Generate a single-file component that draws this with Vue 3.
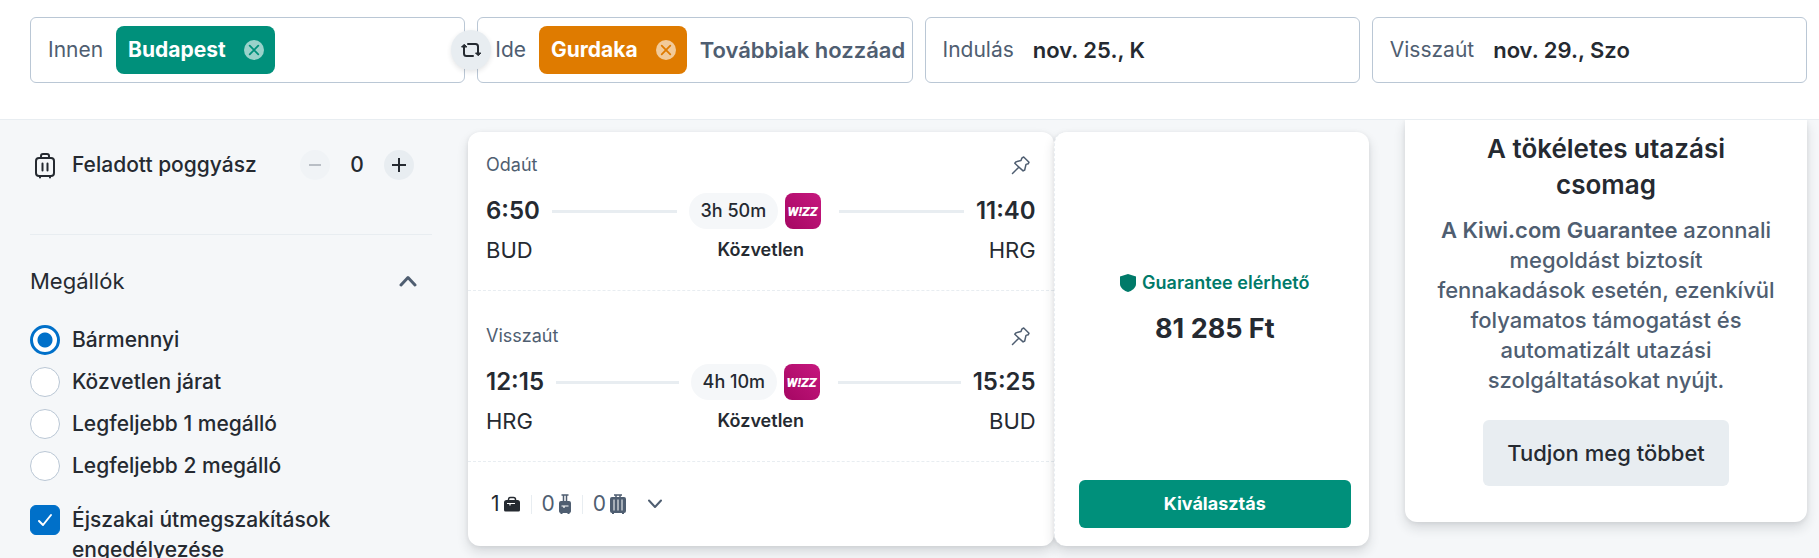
<script setup>
import { ref } from 'vue'

const stops = ref('any')
const overnight = ref(true)
const bags = ref(0)

const stopOptions = [
  { id: 'any', label: 'Bármennyi' },
  { id: 'direct', label: 'Közvetlen járat' },
  { id: 'one', label: 'Legfeljebb 1 megálló' },
  { id: 'two', label: 'Legfeljebb 2 megálló' },
]

const segments = [
  { title: 'Odaút', from: 'BUD', to: 'HRG', dep: '6:50', arr: '11:40', duration: '3h 50m', stops: 'Közvetlen' },
  { title: 'Visszaút', from: 'HRG', to: 'BUD', dep: '12:15', arr: '15:25', duration: '4h 10m', stops: 'Közvetlen' },
]
</script>

<template>
  <div class="page">
    <header class="search">
      <div class="field">
        <label for="from">Innen</label>
        <span class="chip green">
          Budapest
          <button type="button" aria-label="Budapest">
            <svg viewBox="0 0 20 20" width="20" height="20"><circle cx="10" cy="10" r="10" fill="#fff" fill-opacity=".6" /><path d="M5.7 5.7l8.6 8.6M14.3 5.7l-8.6 8.6" stroke="#00907b" stroke-width="1.8" stroke-linecap="round" /></svg>
          </button>
        </span>
        <input id="from" type="text" />
        <button type="button" class="swap" aria-label="Csere">
          <svg viewBox="0 0 22 16" width="22" height="16" fill="none" stroke="#252a31" stroke-width="2" stroke-linecap="round" stroke-linejoin="round">
            <path d="M4 4v7.5a2.5 2.5 0 0 0 2.5 2.500H13M8 2h7.500a2.500 2.500 0 0 1 2.500 2.500V12" />
            <path d="M4 2.500L1.500 5h5zM18 13.500l-2.500-2.500h5z" fill="#252a31" stroke-width="1" />
          </svg>
        </button>
      </div>
      <div class="field">
        <label for="to">Ide</label>
        <span class="chip orange">
          Gurdaka
          <button type="button" aria-label="Gurdaka">
            <svg viewBox="0 0 20 20" width="20" height="20"><circle cx="10" cy="10" r="10" fill="#fff" fill-opacity=".6" /><path d="M5.700 5.700l8.600 8.600M14.300 5.700l-8.600 8.600" stroke="#df7b00" stroke-width="1.800" stroke-linecap="round" /></svg>
          </button>
        </span>
        <input id="to" type="text" placeholder="Továbbiak hozzáad" />
      </div>
      <div class="field date">
        <label for="dep">Indulás</label>
        <input id="dep" type="text" value="nov. 25., K" readonly />
      </div>
      <div class="field date">
        <label for="ret">Visszaút</label>
        <input id="ret" type="text" value="nov. 29., Szo" readonly />
      </div>
    </header>

    <div class="columns">
      <aside class="filters">
        <div class="bagrow">
          <svg viewBox="0 0 30 30" width="30" height="30" fill="none" stroke="#252a31" stroke-width="2" stroke-linecap="round" stroke-linejoin="round">
            <rect x="6" y="8" width="18" height="18" rx="3" /><path d="M11 8V6a2 2 0 0 1 2-2h4a2 2 0 0 1 2 2v2M12.500 13.500v7M17.500 13.500v7M10 26v1.500M20 26v1.500" />
          </svg>
          <span class="baglabel">Feladott poggyász</span>
          <div class="stepper">
            <button type="button" class="round off" aria-label="Kevesebb" disabled>
              <svg viewBox="0 0 14 14" width="14" height="14"><path d="M1 7h12" stroke="#b9bec5" stroke-width="2" /></svg>
            </button>
            <output>{{ bags }}</output>
            <button type="button" class="round" aria-label="Több" @click="bags++">
              <svg viewBox="0 0 14 14" width="14" height="14"><path d="M0 7h14M7 0v14" stroke="#252a31" stroke-width="2" /></svg>
            </button>
          </div>
        </div>

        <section class="stops">
          <button type="button" class="fold">
            Megállók
            <svg viewBox="0 0 18 12" width="18" height="12" fill="none" stroke="#4f5e71" stroke-width="3" stroke-linecap="round" stroke-linejoin="round"><path d="M2 10l7-7.500 7 7.500" /></svg>
          </button>
          <div class="options">
            <label v-for="o in stopOptions" :key="o.id" class="option">
              <input v-model="stops" type="radio" name="stops" :value="o.id" />
              <span>{{ o.label }}</span>
            </label>
          </div>
          <label class="option">
            <span class="tick">
              <input v-model="overnight" type="checkbox" />
              <svg viewBox="0 0 16 14" width="16" height="14" fill="none" stroke="#fff" stroke-width="2" stroke-linecap="round" stroke-linejoin="round"><path d="M2 8l4 4 8-10" /></svg>
            </span>
            <span>Éjszakai útmegszakítások engedélyezése</span>
          </label>
        </section>
      </aside>

      <main>
        <article class="result">
          <div class="trip">
            <section v-for="s in segments" :key="s.title" class="segment">
              <div class="seghead">
                <span>{{ s.title }}</span>
                <button type="button" aria-label="Rögzítés">
                  <svg viewBox="0 0 20 20" width="20" height="20" fill="none" stroke="#4f5e71" stroke-width="1.500" stroke-linecap="round" stroke-linejoin="round"><path d="M12.700 2l5.300 5.200-.8 1.600-2.200.6-1.300 5.600-1.600.9-8.300-7.600 1-1.400 5.200-1.300.8-2.400zM7.600 12.400L1.500 18.500" /></svg>
                </button>
              </div>
              <div class="times">
                <b>{{ s.dep }}</b>
                <i class="line"></i>
                <span class="pill">{{ s.duration }}</span>
                <svg viewBox="0 0 36 36" width="36" height="36">
                  <defs><linearGradient id="wz" x1="1" y1="0" x2="0" y2="1"><stop offset="0" stop-color="#c6187e" /><stop offset="1" stop-color="#a50763" /></linearGradient></defs>
                  <rect width="36" height="36" rx="8" fill="url(#wz)" />
                  <text x="17.500" y="23" text-anchor="middle" class="wizz">W!ZZ</text>
                </svg>
                <i class="line last"></i>
                <b>{{ s.arr }}</b>
              </div>
              <div class="places">
                <span>{{ s.from }}</span>
                <span class="direct">{{ s.stops }}</span>
                <span class="to">{{ s.to }}</span>
              </div>
            </section>
            <div class="bags">
              <span class="bag dark">1
                <svg viewBox="0 0 16 16" width="16" height="16"><path d="M4.500 5V3.500a2 2 0 0 1 2-2h3a2 2 0 0 1 2 2V5" fill="none" stroke="currentColor" stroke-width="1.500" /><path d="M2.500 4h11A2.500 2.500 0 0 1 16 6.500V14a1.500 1.500 0 0 1-1.500 1.500h-13A1.500 1.500 0 0 1 0 14V6.500A2.500 2.500 0 0 1 2.500 4z" fill="currentColor" /><path d="M3 7.500h8M6 7.500V9.500" stroke="#fff" stroke-width="1.200" fill="none" /></svg>
              </span>
              <span class="bag">0
                <svg viewBox="0 0 12 20" width="12" height="20"><path d="M2.500 1h7M4.500 1v8M7.500 1v8" stroke="currentColor" stroke-width="1.500" fill="none" /><path d="M2 7h8a2 2 0 0 1 2 2v8a2 2 0 0 1-1.500 2v1H8.500v-1h-5v1H1.500v-1A2 2 0 0 1 0 17V9a2 2 0 0 1 2-2z" fill="currentColor" /><path d="M2.500 12h7M5 12v2" stroke="#fff" stroke-width="1.200" fill="none" /></svg>
              </span>
              <span class="bag">0
                <svg viewBox="0 0 16 20" width="16" height="20"><path d="M4 1h8M6 1v3M10 1v3" stroke="currentColor" stroke-width="1.500" fill="none" /><path d="M2 3h12a2 2 0 0 1 2 2v12a2 2 0 0 1-2 2v1h-2v-1H4v1H2v-1a2 2 0 0 1-2-2V5a2 2 0 0 1 2-2z" fill="currentColor" /><path d="M4 5.500v11M8 5.500v11M12 5.500v11" stroke="#fff" stroke-width="1" fill="none" /></svg>
              </span>
              <button type="button" class="more" aria-label="Részletek">
                <svg viewBox="0 0 14 10" width="14" height="10" fill="none" stroke="#4f5e71" stroke-width="2" stroke-linecap="round" stroke-linejoin="round"><path d="M1 1.500l6 6.500 6-6.500" /></svg>
              </button>
            </div>
          </div>
          <div class="offer">
            <div class="price">
              <p class="guarantee">
                <svg viewBox="0 0 16 18" width="16" height="18"><path d="M8 0l8 2.500V10c0 4-4.500 7-8 8-3.500-1-8-4-8-8V2.500z" fill="#007a69" /></svg>
                Guarantee elérhető
              </p>
              <strong>81 285 Ft</strong>
            </div>
            <button type="button" class="select">Kiválasztás</button>
          </div>
        </article>
      </main>

      <aside class="promo">
        <h2>A tökéletes utazási csomag</h2>
        <p><b>A Kiwi.com Guarantee</b> azonnali megoldást biztosít fennakadások esetén, ezenkívül folyamatos támogatást és automatizált utazási szolgáltatásokat nyújt.</p>
        <button type="button">Tudjon meg többet</button>
      </aside>
    </div>
  </div>
</template>

<style>
body { margin: 0; overflow: hidden; }
</style>

<style scoped>
* { box-sizing: border-box; }
.page {
  height: 100vh;
  overflow: hidden;
  display: flex;
  flex-direction: column;
  background: #f5f7f9;
  color: #252a31;
  font: 500 22px/30px Inter, "Liberation Sans", sans-serif;
}
button { border: 0; padding: 0; background: none; font: inherit; color: inherit; cursor: pointer; }
button svg { display: block; }
.search {
  position: relative;
  z-index: 1;
  flex: none;
  display: grid;
  grid-template-columns: repeat(4, minmax(0, 1fr));
  gap: 12px;
  padding: 17px 12px 36px 30px;
  background: #fff;
  border-bottom: 1px solid #e8edf1;
}
.field {
  position: relative;
  display: flex;
  align-items: center;
  gap: 13px;
  height: 66px;
  padding: 0 2px 0 17px;
  border: 1px solid #bac7d5;
  border-radius: 6px;
}
.field.date { gap: 19px; }
.field label { font-size: 21px; font-weight: 400; color: #4f5e71; }
.field input {
  flex: 1;
  min-width: 0;
  height: 48px;
  padding: 0;
  border: 0;
  outline: 0;
  background: none;
  font: inherit;
  font-weight: 600;
  color: #252a31;
}
.field input::placeholder { color: #4f5e71; opacity: 1; }
.chip {
  display: flex;
  align-items: center;
  gap: 18px;
  height: 48px;
  padding: 0 11px 0 12px;
  border-radius: 8px;
  color: #fff;
  font-size: 21px;
  font-weight: 700;
}
.green { background: #00907b; }
.orange { background: #df7b00; }
.swap {
  position: absolute;
  right: -27px;
  top: 12px;
  z-index: 2;
  width: 40px;
  height: 40px;
  display: grid;
  place-items: center;
  border-radius: 50%;
  background: #e8edf1;
  box-shadow: 0 2px 5px rgba(37, 42, 49, .12);
}
.columns {
  flex: 1;
  display: grid;
  grid-template-columns: 402px minmax(0, 1fr) 402px;
  gap: 36px;
  align-items: start;
  padding: 0 12px 0 30px;
}
.filters { padding-top: 30px; font-size: 21px; }
.bagrow {
  display: flex;
  align-items: center;
  padding: 0 18px 54px 0;
  border-bottom: 1px solid #e8edf1;
}
.baglabel { flex: 1; margin-left: 12px; }
.stepper { display: flex; align-items: center; }
.stepper output { width: 54px; text-align: center; }
.round { width: 30px; height: 30px; display: grid; place-items: center; border-radius: 50%; background: #e8edf1; }
.round.off { background: #f0f3f6; }
.stops { padding-top: 31px; }
.fold {
  display: flex;
  justify-content: space-between;
  align-items: center;
  width: 100%;
  padding-right: 15px;
  font-size: 22px;
  font-weight: 400;
}
.options { display: grid; gap: 12px; margin: 29px 0 24px; }
.option { display: flex; gap: 12px; align-items: flex-start; }
.option input {
  appearance: none;
  flex: none;
  display: block;
  width: 30px;
  height: 30px;
  margin: 0;
  border: 1px solid #bac7d5;
  border-radius: 50%;
  background: #fff;
}
.option input[type="radio"]:checked { border: 3px solid #0070c9; background: radial-gradient(circle, #0070c9 7px, #fff 8px); }
.tick { flex: none; display: grid; }
.tick input, .tick svg { grid-area: 1 / 1; }
.tick svg { place-self: center; pointer-events: none; }
.option .tick input { border-radius: 6px; }
.option .tick input:checked { background: #0070c9; border-color: #0070c9; }
.option .tick input:not(:checked) + svg { visibility: hidden; }
main { padding-top: 12px; }
.result { display: grid; grid-template-columns: 65fr 35fr; }
.trip, .offer {
  background: #fff;
  border-radius: 12px;
  box-shadow: 0 6px 12px rgba(37, 42, 49, .14), 0 1px 4px rgba(37, 42, 49, .08);
}
.segment { padding: 30px 18px 25px; border-bottom: 1px dashed #e8edf1; }
.segment:first-child { padding-top: 18px; }
.seghead {
  display: flex;
  justify-content: space-between;
  align-items: center;
  padding-right: 5px;
  font-size: 18px;
  font-weight: 400;
  color: #4f5e71;
}
.times { display: flex; align-items: center; margin-top: 13px; }
.times b { font-size: 24px; font-weight: 600; }
.line { flex: 1; height: 3px; margin: 0 12px; background: #e8edf1; }
.line.last { margin-left: 18px; }
.pill {
  height: 36px;
  padding: 0 12px;
  margin-right: 7px;
  border-radius: 18px;
  background: #f5f7f9;
  font-size: 18px;
  line-height: 36px;
}
.wizz { font: italic 900 13px Roboto, sans-serif; fill: #fff; }
.places {
  display: grid;
  grid-template-columns: 1fr auto 1fr;
  margin-top: 6px;
  font-weight: 400;
}
.direct { font-size: 18px; font-weight: 600; }
.to { text-align: right; }
.bags { display: flex; align-items: center; height: 84px; padding-left: 14px; }
.bag {
  display: flex;
  align-items: center;
  gap: 4px;
  height: 19px;
  padding: 0 11px 0 10px;
  border-right: 1px solid #e8edf1;
  font-size: 21px;
  font-weight: 400;
  color: #4f5e71;
}
.bag.dark { padding-left: 9px; color: #252a31; }
.bag:nth-child(3) { border: 0; }
.more { margin-left: 11px; }
.offer { display: flex; flex-direction: column; padding: 18px 18px 18px 24px; border-left: 1px dashed #e8edf1; }
.price {
  flex: 1;
  display: flex;
  flex-direction: column;
  align-items: center;
  justify-content: center;
  gap: 13px;
  padding-bottom: 15px;
}
.guarantee { display: flex; align-items: center; gap: 6px; margin: 0; font-size: 18px; font-weight: 600; color: #007a69; }
.price strong { font-size: 27px; line-height: 36px; font-weight: 700; }
.select { height: 48px; border-radius: 6px; background: #00907b; color: #fff; font-size: 18px; font-weight: 700; }
.promo {
  padding: 11px 30px 36px;
  border-radius: 0 0 12px 12px;
  background: #fff;
  text-align: center;
  box-shadow: 0 6px 12px rgba(37, 42, 49, .14), 0 1px 4px rgba(37, 42, 49, .08);
}
.promo h2 { margin: 0 36px; font-size: 26px; line-height: 36px; font-weight: 600; }
.promo p { margin: 12px 0 25px; color: #4f5e71; }
.promo p b { font-weight: 600; }
.promo button { height: 66px; padding: 0 24px; border-radius: 6px; background: #e8edf1; }
</style>
